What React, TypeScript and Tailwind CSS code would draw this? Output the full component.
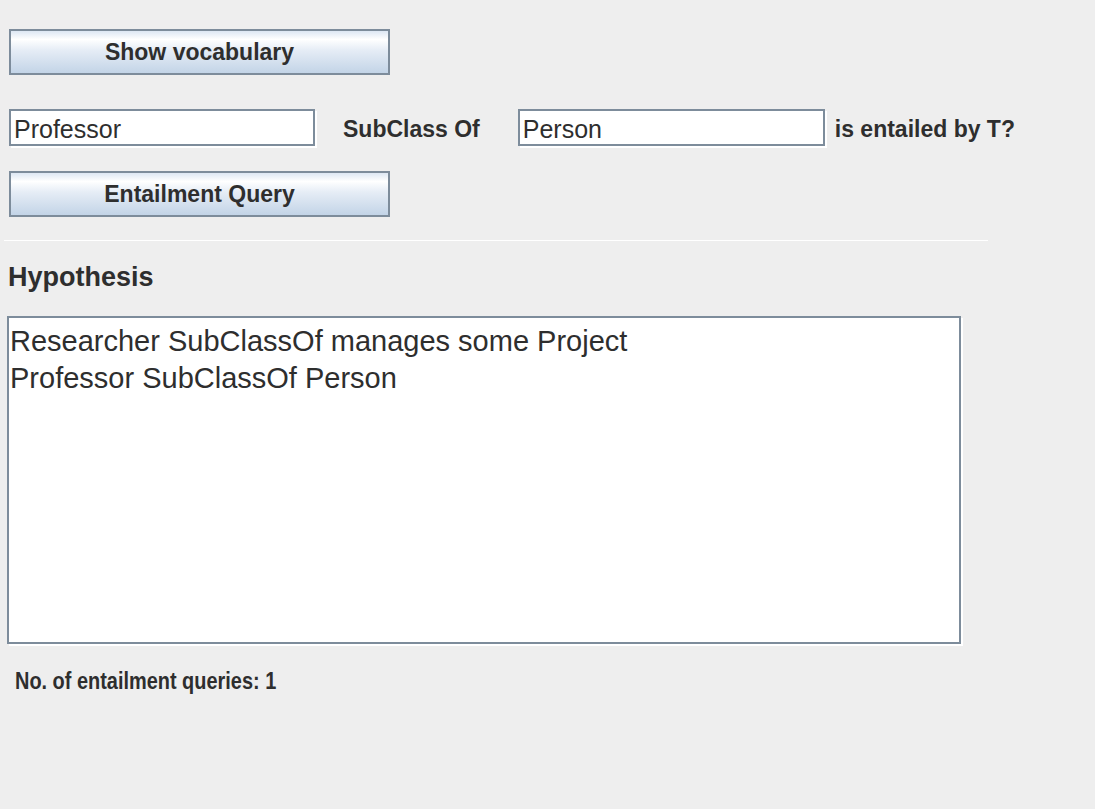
import React from "react";

const btn =
  "flex items-center justify-center w-[381px] h-[46px] border-2 border-[#7d8c9b] bg-[linear-gradient(180deg,#dde7f3_0%,#ffffff_20%,#e6edf6_45%,#c3d4e7_100%)] text-[23px] font-bold text-[#2e2e2e]";

export default function App() {
  return (
    <div
      className="w-[1095px] h-[809px] bg-[#eeeeee] text-[#2e2e2e] flex flex-col pl-[4px] pt-[29px] overflow-hidden"
      style={{ fontFamily: '"Liberation Sans", Arial, sans-serif' }}
    >
      <div className={btn + " ml-[5px]"}>Show vocabulary</div>

      <div className="flex items-center mt-[34px] h-[37px]">
        <div className="ml-[5px] w-[306px] h-[37px] border-2 border-[#7d8c9b] bg-white shadow-[2px_2px_0_#ffffff] flex items-center pl-[3px] pt-[3px] text-[25px] leading-none">
          Professor
        </div>
        <span className="ml-[28px] pt-[3px] text-[23px] font-bold">SubClass Of</span>
        <div className="ml-[38px] w-[307px] h-[37px] border-2 border-[#7d8c9b] bg-white shadow-[2px_2px_0_#ffffff] flex items-center pl-[3px] pt-[3px] text-[25px] leading-none">
          Person
        </div>
        <span className="ml-[10px] pt-[3px] text-[23px] font-bold">is entailed by T?</span>
      </div>

      <div className={btn + " ml-[5px] mt-[25px]"}>Entailment Query</div>

      <div className="mt-[23px] w-[984px] h-[1px] bg-white" />

      <div className="mt-[21px] ml-[4px] text-[27px] leading-[31px] font-bold">Hypothesis</div>

      <div className="mt-[23px] ml-[3px] w-[954px] h-[328px] border-2 border-[#7d8c9b] bg-white shadow-[2px_2px_0_#ffffff] pl-[1px] pt-[5px] text-[29px] leading-[37px]">
        <div>Researcher SubClassOf manages some Project</div>
        <div>Professor SubClassOf Person</div>
      </div>

      <div className="mt-[23px] ml-[11px] text-[24px] leading-[28px] font-bold">
        <span className="inline-block origin-left scale-x-[0.83]">No. of entailment queries: 1</span>
      </div>
    </div>
  );
}
